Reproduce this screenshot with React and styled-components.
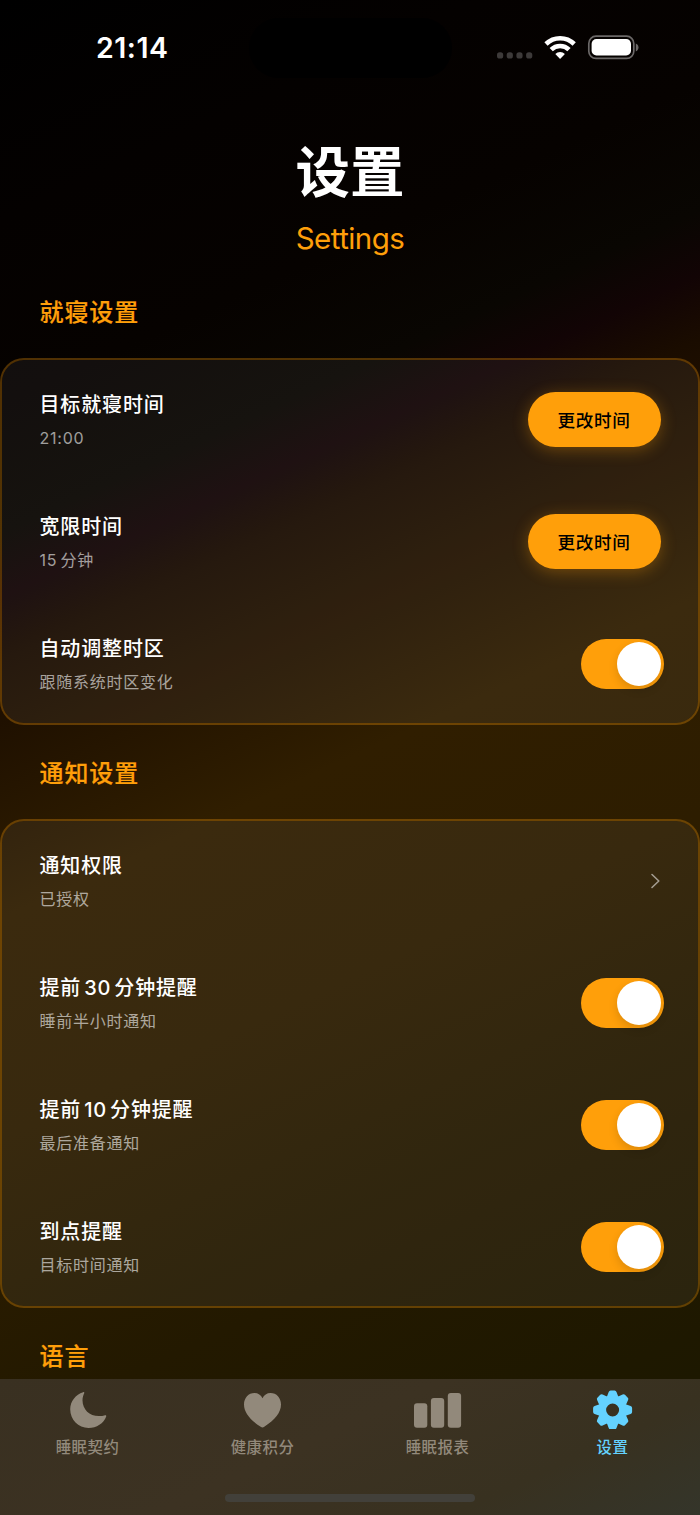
import React, { useState } from 'react';
import styled, { createGlobalStyle } from 'styled-components';

const GlobalStyle = createGlobalStyle`
  * {
    box-sizing: border-box;
  }

  body {
    margin: 0;
    background: #000;
    font-family: Inter, 'Noto Sans CJK SC', sans-serif;
  }
`;

const Screen = styled.div`
  position: relative;
  display: flex;
  flex-direction: column;
  width: 700px;
  height: 1515px;
  overflow: hidden;
  color: #fff;
  background: linear-gradient(
    155.2deg,
    #000 0%,
    #040100 12%,
    #060200 22%,
    #090602 29%,
    #120405 32.5%,
    #1a0c00 36%,
    #301e00 50%,
    #2d1d00 62%,
    #231900 78%,
    #1e1800 90%,
    #1a1800 100%
  );
`;

const StatusBar = styled.div`
  display: flex;
  flex: none;
  align-items: center;
  justify-content: space-between;
  height: 95px;
  padding: 0 61px 0 96px;
`;

const Clock = styled.span`
  font-size: 28.5px;
  font-weight: 600;
  letter-spacing: 0.5px;
`;

const Island = styled.div`
  position: absolute;
  top: 18px;
  left: 249px;
  width: 203px;
  height: 60px;
  border-radius: 30px;
  background: #000;
`;

const Header = styled.header`
  flex: none;
  height: 169px;
  padding-top: 37px;
  text-align: center;
`;

const Title = styled.h1`
  margin: 0;
  font-size: 54.5px;
  font-weight: 700;
  line-height: 80px;
`;

const Subtitle = styled.div`
  font-size: 29.5px;
  line-height: 52px;
  letter-spacing: -0.55px;
  color: #ff9f0a;
`;

const SectionTitle = styled.h2`
  flex: none;
  margin: 0;
  height: 94px;
  padding: 0 39.5px;
  font-size: 24px;
  font-weight: 500;
  line-height: 97px;
  letter-spacing: 0.9px;
  color: #ff9f0a;
  -webkit-text-stroke: 0.2px #ff9f0a;
`;

const Card = styled.section`
  flex: none;
  border: 2px solid rgba(255, 159, 10, 0.3);
  border-radius: 24px;
  background: rgba(255, 255, 255, 0.055);
  background-clip: padding-box;
`;

const Rows = styled.div`
  margin: -1.5px 0;
`;

const Row = styled.div`
  display: flex;
  align-items: center;
  justify-content: space-between;
  height: 122px;
  padding: 0 34px 0 37.5px;
`;

const RowText = styled.div`
  padding-top: 4px;
`;

const RowTitle = styled.div`
  font-size: 20px;
  font-weight: 500;
  line-height: 34px;
  letter-spacing: 0.85px;
  word-spacing: -3.2px;
`;

const RowNote = styled.div`
  font-size: 16px;
  line-height: 33px;
  letter-spacing: 0.75px;
  word-spacing: -2px;
  color: rgba(255, 255, 255, 0.6);
`;

const PillButton = styled.button`
  width: 133px;
  height: 55px;
  margin-right: 3px;
  padding: 0 1px 1px 0;
  border: 0;
  border-radius: 28px;
  background: #ff9f0a;
  box-shadow: 0 3px 16px rgba(255, 159, 10, 0.32);
  color: #000;
  font: inherit;
  font-size: 17.6px;
  font-weight: 500;
  letter-spacing: 0.7px;
`;

const Switch = styled.button`
  display: flex;
  align-items: center;
  justify-content: ${(props) => (props.$on ? 'flex-end' : 'flex-start')};
  width: 83px;
  height: 50px;
  padding: 3px;
  border: 0;
  border-radius: 25px;
  background: ${(props) => (props.$on ? '#ff9f0a' : '#39393d')};
`;

const Knob = styled.span`
  width: 44px;
  height: 44px;
  border-radius: 50%;
  background: #fff;
  box-shadow: 0 4px 10px rgba(0, 0, 0, 0.14);
`;

const TabBar = styled.nav`
  position: absolute;
  right: 0;
  bottom: 0;
  left: 0;
  display: grid;
  grid-template-columns: repeat(4, 1fr);
  height: 136px;
  padding-top: 10px;
  background: linear-gradient(155deg, #393021, #3c3222 45%, #383120 75%, #34352a);
`;

const Tab = styled.div`
  display: flex;
  flex-direction: column;
  align-items: center;
  font-size: 15.4px;
  font-weight: 500;
  line-height: 24px;
  letter-spacing: 0.5px;
  color: ${(props) => (props.$active ? '#64d2ff' : '#92897b')};

  svg {
    display: block;
    margin-bottom: 7px;
  }
`;

const HomeIndicator = styled.div`
  position: absolute;
  bottom: 13.5px;
  left: 225px;
  width: 250px;
  height: 8px;
  border-radius: 4px;
  background: #42403a;
`;

const StatusIcons = () => (
  <svg width="143" height="26" viewBox="496 34.700 143 26">
    <g fill="#3d3a39">
      <rect x="497" y="52" width="6.2" height="6.2" rx="2.6" />
      <rect x="506.7" y="52" width="6.2" height="6.2" rx="2.6" />
      <rect x="516.4" y="52" width="6.2" height="6.2" rx="2.6" />
      <rect x="526.1" y="52" width="6.2" height="6.2" rx="2.6" />
    </g>
    <g fill="none" stroke="#fff" strokeWidth="4.6">
      <path d="M546 43.700a20 20 0 0 1 28.200 0" />
      <path d="M551.200 49.400a12.600 12.600 0 0 1 17.800 0" />
    </g>
    <path d="M560.1 58.6l-4.8-4.9a6.900 6.900 0 0 1 9.6 0z" fill="#fff" />
    <rect x="588.8" y="35.9" width="45" height="22.2" rx="7.2" fill="none" stroke="#6b6867" strokeWidth="1.7" />
    <rect x="591.6" y="38.8" width="39.4" height="16.4" rx="4.8" fill="#fff" />
    <path d="M635.8 43.3c3.6 1.2 3.6 6.6 0 7.8z" fill="#6b6867" />
  </svg>
);

const Chevron = () => (
  <svg width="17" height="20" viewBox="0 0 17 20" fill="none" stroke="#a39c90" strokeWidth="1.6" strokeLinecap="round" strokeLinejoin="round">
    <path d="M5 3.500l6.800 6.500L5 16.500" />
  </svg>
);

const MoonIcon = () => (
  <svg width="40" height="40" viewBox="0.500 0 40 40" fill="currentColor">
    <path d="M15.6 3.2C8.200 5.600 2.700 12.200 2.700 20.300C2.700 30.800 10.700 38.900 21.100 38.900C29 38.900 36.200 34.300 38.700 27.400C39 26.600 38.500 25.900 37.600 26.200C35.800 26.800 33.700 27.100 31.400 27.100C21.900 27.100 15 20.400 15 11.200C15 8.700 15.800 6.100 16.700 4.200C17 3.400 16.500 2.900 15.600 3.200Z" />
  </svg>
);

const HeartIcon = () => (
  <svg width="40" height="40" viewBox="0.500 0 40 40" fill="currentColor">
    <path d="M20 38.600C19.500 38.600 18.800 38.200 18.200 37.800C7.500 31 1.500 23.500 1.500 15.600C1.500 8.900 6 4.100 12 4.100C15.600 4.100 18.500 6.100 20 9.200C21.500 6.100 24.400 4.100 28 4.100C34 4.100 38.500 8.900 38.500 15.600C38.500 23.500 32.500 31 21.800 37.800C21.200 38.200 20.500 38.600 20 38.600Z" />
  </svg>
);

const BarsIcon = () => (
  <svg width="48" height="40" viewBox="0.500 0 48 40" fill="currentColor">
    <rect x="0.500" y="14.300" width="13.300" height="24.500" rx="3" />
    <rect x="17.400" y="9" width="13.300" height="29.800" rx="3" />
    <rect x="34.300" y="4" width="13.300" height="34.800" rx="3" />
  </svg>
);

const GearIcon = () => (
  <svg width="40" height="40" viewBox="-19.600 -21 40 40" fill="currentColor">
    <circle r="10.500" fill="none" stroke="currentColor" strokeWidth="8" />
    {[0, 45, 90, 135, 180, 225, 270, 315].map((angle) => (
      <path
        key={angle}
        d="M-5.800 -13L-3.900 -18Q-3.400 -19.500 -2 -19.500L2 -19.500Q3.400 -19.500 3.900 -18L5.800 -13Z"
        transform={`rotate(${angle})`}
      />
    ))}
  </svg>
);

const Toggle = () => {
  const [on, setOn] = useState(true);

  return (
    <Switch $on={on} onClick={() => setOn(!on)}>
      <Knob />
    </Switch>
  );
};

const Setting = ({ title, note, children }) => (
  <Row>
    <RowText>
      <RowTitle>{title}</RowTitle>
      <RowNote>{note}</RowNote>
    </RowText>
    {children}
  </Row>
);

const App = () => {
  return (
    <Screen>
      <GlobalStyle />
      <Island />
      <StatusBar>
        <Clock>21:14</Clock>
        <StatusIcons />
      </StatusBar>

      <Header>
        <Title>设置</Title>
        <Subtitle>Settings</Subtitle>
      </Header>

      <SectionTitle>就寝设置</SectionTitle>
      <Card>
        <Rows>
          <Setting title="目标就寝时间" note="21:00">
            <PillButton>更改时间</PillButton>
          </Setting>
          <Setting title="宽限时间" note="15 分钟">
            <PillButton>更改时间</PillButton>
          </Setting>
          <Setting title="自动调整时区" note="跟随系统时区变化">
            <Toggle />
          </Setting>
        </Rows>
      </Card>

      <SectionTitle>通知设置</SectionTitle>
      <Card>
        <Rows>
          <Setting title="通知权限" note="已授权">
            <Chevron />
          </Setting>
          <Setting title="提前 30 分钟提醒" note="睡前半小时通知">
            <Toggle />
          </Setting>
          <Setting title="提前 10 分钟提醒" note="最后准备通知">
            <Toggle />
          </Setting>
          <Setting title="到点提醒" note="目标时间通知">
            <Toggle />
          </Setting>
        </Rows>
      </Card>

      <SectionTitle>语言</SectionTitle>

      <TabBar>
        <Tab><MoonIcon />睡眠契约</Tab>
        <Tab><HeartIcon />健康积分</Tab>
        <Tab><BarsIcon />睡眠报表</Tab>
        <Tab $active><GearIcon />设置</Tab>
        <HomeIndicator />
      </TabBar>
    </Screen>
  )
};

export default App;
